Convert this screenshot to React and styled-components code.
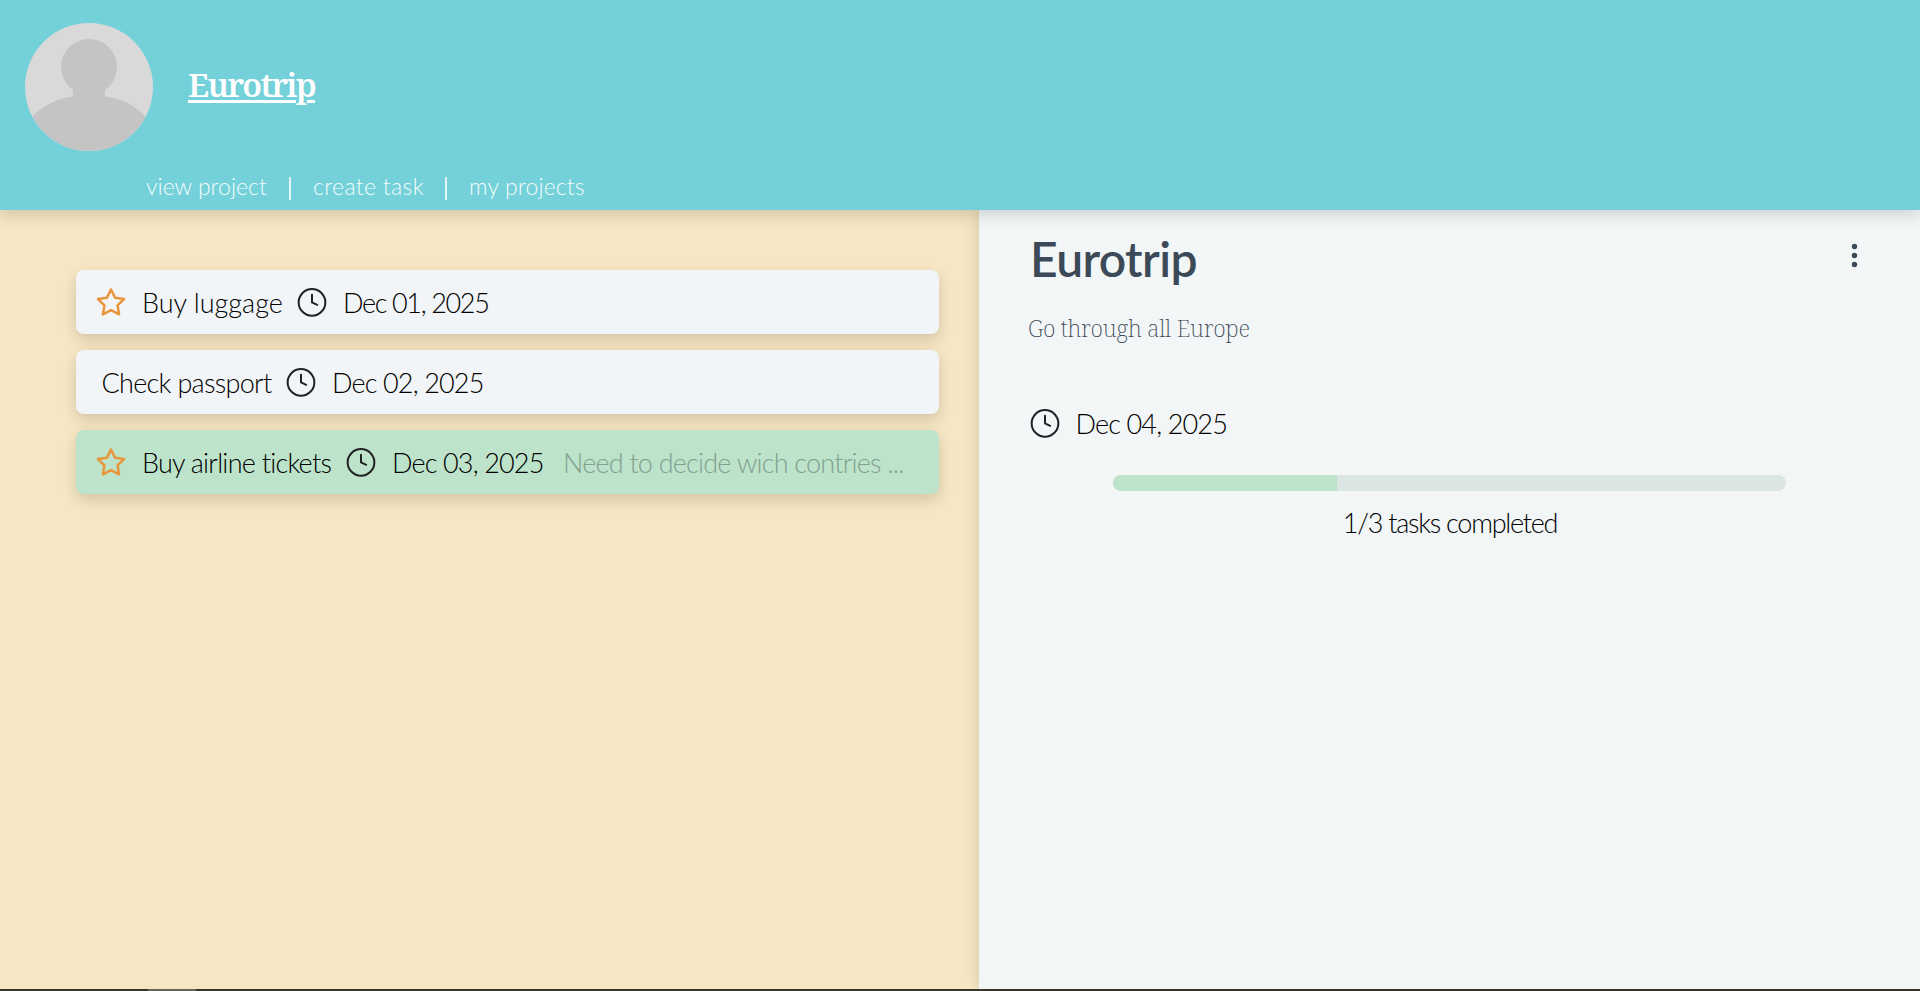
import React from 'react';
import styled, { createGlobalStyle } from 'styled-components';

const GlobalStyle = createGlobalStyle`
  * { box-sizing: border-box; }
  body {
    margin: 0;
    overflow: hidden;
    color: #000;
    font-family: Lato, "Liberation Sans", sans-serif;
    font-weight: 300;
    font-variant-ligatures: none;
  }
  h1, h2, p, ul { margin: 0; padding: 0; }
`;

const slab = '"Noto Serif", "DejaVu Serif", serif';

const Page = styled.div`
  display: flex;
  flex-direction: column;
  height: 991px;
`;

const Header = styled.header`
  z-index: 2;
  height: 210px;
  flex: none;
  padding: 23px 25px 0;
  background: #74d1d9;
  box-shadow: 0 5px 15px rgba(0, 0, 0, 0.15);
`;

const Brand = styled.div`
  display: flex;
  gap: 35px;
  height: 128px;
`;

const Avatar = styled.svg`
  width: 128px;
  height: 128px;
  border-radius: 50%;
`;

const BrandTitle = styled.h1`
  padding-top: 42px;
  color: #fff;
  font: 600 33px/40px ${slab};
  letter-spacing: -1.7px;
  text-decoration: underline;
  text-decoration-thickness: 3px;
  text-underline-offset: 3px;
`;

const Nav = styled.nav`
  display: flex;
  margin: 26px 0 0 121px;
  height: 23px;
`;

const NavLink = styled.a`
  width: ${(p) => p.$width}px;
  color: rgba(255, 255, 255, 0.95);
  font-size: 23px;
  line-height: 19px;
  letter-spacing: ${(p) => p.$track || 0}px;
  white-space: nowrap;

  & + & {
    padding-left: 22px;
    border-left: ${(p) => p.$rule || 1}px solid rgba(255, 255, 255, 0.8);
  }
`;

const Main = styled.main`
  display: flex;
  flex: 1;
  min-height: 0;
`;

const TaskPane = styled.section`
  width: 979px;
  padding: 60px 40px 0 76px;
  background: #f6e6c3;
`;

const TaskList = styled.ul`
  display: flex;
  flex-direction: column;
  gap: 16px;
  list-style: none;
`;

const TaskCard = styled.li`
  display: flex;
  align-items: center;
  height: 64px;
  padding-left: ${(p) => (p.$starred ? 19 : 24.5)}px;
  border-radius: 8px;
  background: ${(p) => (p.$done ? '#bde3cb' : '#f2f5f7')};
  box-shadow: 0 6px 15px rgba(0, 0, 0, 0.15);
`;

const Icon = styled.svg`
  flex: none;
  width: 32px;
  height: 32px;
  margin-right: 14px;
  fill: none;
  stroke: ${(p) => p.$color || '#202124'};
  stroke-width: ${(p) => p.$weight || 1.5};
  stroke-linecap: round;
  stroke-linejoin: round;
`;

const Label = styled.span`
  width: ${(p) => (p.$width ? `${p.$width}px` : 'auto')};
  padding: 2px 0 0 1px;
  font-size: 27px;
  line-height: 32px;
  letter-spacing: ${(p) => p.$track || 0}px;
  white-space: nowrap;
`;

const Note = styled(Label)`
  color: #82a08f;
`;

const DetailPane = styled.section`
  z-index: 1;
  flex: 1;
  padding-top: 25px;
  background: #f2f6f7;
  box-shadow: 0 0 15px rgba(0, 0, 0, 0.15);
`;

const DetailHead = styled.div`
  display: flex;
  justify-content: space-between;
  padding: 0 49px 0 51px;
`;

const DetailTitle = styled.h2`
  color: #3c4a58;
  font-size: 48px;
  font-weight: 600;
  line-height: 48px;
  letter-spacing: -0.6px;
`;

const MenuDots = styled.svg`
  width: 33px;
  height: 45px;
  fill: #3c4a58;
`;

const Description = styled.p`
  margin: 30px 0 64px 49px;
  color: #3c4a58;
  font: 200 23px/30px ${slab};
  letter-spacing: -0.25px;
`;

const DueDate = styled.div`
  display: flex;
  align-items: center;
  height: 32px;
  margin-left: 49.500px;
`;

const Track = styled.div`
  width: 673px;
  height: 16px;
  margin: 36px auto 16px;
  overflow: hidden;
  border-radius: 8px;
  background: #dae5e4;
`;

const Fill = styled.div`
  width: ${(p) => p.$ratio * 100}%;
  height: 100%;
  background: #bde3cb;
`;

const Caption = styled.p`
  text-align: center;
`;

const BottomBar = styled.footer`
  z-index: 2;
  flex: none;
  height: 2px;
  padding-left: 148px;
  background: #36352b;
`;

const BottomTab = styled.div`
  width: 48px;
  height: 2px;
  background: #66655a;
`;

const Star = () => (
  <Icon viewBox="0 0 24 24" $color="#e8963c" $weight={1.9}>
    <path d="M12 2.6l3.03 6.14L21.800 9.730l-4.900 4.780 1.160 6.740L12 18.070l-6.060 3.180L7.100 14.510 2.200 9.730l6.770-.990L12 2.600z" />
  </Icon>
);

const Clock = () => (
  <Icon viewBox="0 0 24 24">
    <circle cx="12" cy="12.3" r="10" />
    <path d="M12 6.5v5.8l3.9 1.8" />
  </Icon>
);

const tasks = [
  { name: 'Buy luggage', width: 155, track: 0, date: 'Dec 01, 2025', dateTrack: -1.35, starred: true },
  { name: 'Check passport', width: 184.5, track: -0.7, date: 'Dec 02, 2025', dateTrack: -0.85 },
  {
    name: 'Buy airline tickets', width: 204, track: -0.75, date: 'Dec 03, 2025', dateTrack: -0.85,
    starred: true, done: true, note: 'Need to decide wich contries ...',
  },
];

export default function App() {
  return (
    <Page>
      <GlobalStyle />
      <Header>
        <Brand>
          <Avatar viewBox="0 0 128 128">
            <rect width="128" height="128" fill="#d9d9d9" />
            <g fill="#c4c4c4">
              <circle cx="64" cy="44" r="28" />
              <path d="M48 62V73.500C31 75.500 17 83 7 94V128H121V94C111 83 97 75.500 80 73.500V62z" />
            </g>
          </Avatar>
          <BrandTitle>Eurotrip</BrandTitle>
        </Brand>
        <Nav>
          <NavLink $width={143}>view project</NavLink>
          <NavLink $width={156} $track={0.35}>create task</NavLink>
          <NavLink $width={150} $track={0.15} $rule={2}>my projects</NavLink>
        </Nav>
      </Header>
      <Main>
        <TaskPane>
          <TaskList>
            {tasks.map((t) => (
              <TaskCard key={t.name} $starred={t.starred} $done={t.done}>
                {t.starred && <Star />}
                <Label $width={t.width} $track={t.track}>{t.name}</Label>
                <Clock />
                <Label $width={171} $track={t.dateTrack}>{t.date}</Label>
                {t.note && <Note $track={-0.78}>{t.note}</Note>}
              </TaskCard>
            ))}
          </TaskList>
        </TaskPane>
        <DetailPane>
          <DetailHead>
            <DetailTitle>Eurotrip</DetailTitle>
            <MenuDots viewBox="0 0 33 45">
              <circle cx="16.500" cy="11.500" r="2.700" />
              <circle cx="16.500" cy="20.500" r="2.700" />
              <circle cx="16.500" cy="29.500" r="2.700" />
            </MenuDots>
          </DetailHead>
          <Description>Go through all Europe</Description>
          <DueDate>
            <Clock />
            <Label $track={-0.85}>Dec 04, 2025</Label>
          </DueDate>
          <Track>
            <Fill $ratio={1 / 3} />
          </Track>
          <Caption>
            <Label $track={-1.25}>1/3 tasks completed</Label>
          </Caption>
        </DetailPane>
      </Main>
      <BottomBar>
        <BottomTab />
      </BottomBar>
    </Page>
  );
}
